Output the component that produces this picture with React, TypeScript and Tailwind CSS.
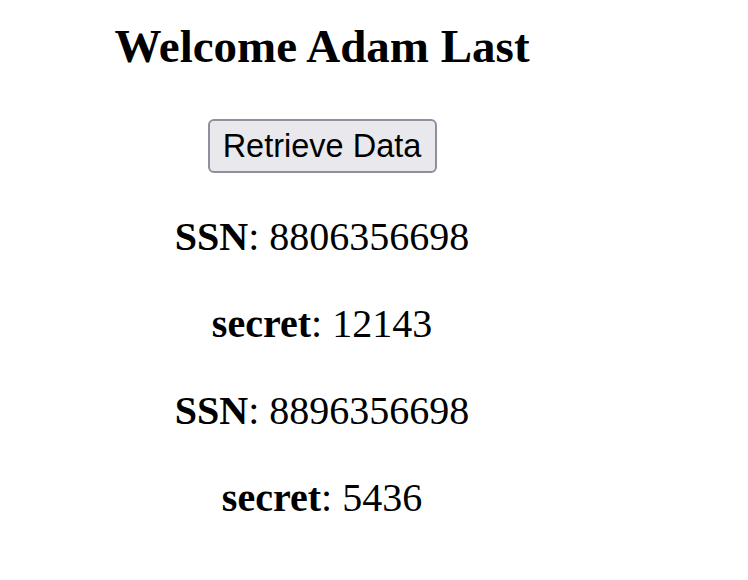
export default function App() {
  const records = [
    { label: "SSN", value: "8806356698" },
    { label: "secret", value: "12143" },
    { label: "SSN", value: "8896356698" },
    { label: "secret", value: "5436" },
  ];

  return (
    <div className="min-h-[580px] w-[748px] bg-white text-black">
      <div className="flex w-[644px] flex-col items-center pt-[20px] text-center font-['Liberation_Serif',serif]">
        <h1 className="text-[47px] font-bold leading-[52px]">Welcome Adam Last</h1>

        <button
          type="button"
          className="mt-[47px] flex h-[54px] w-[229px] items-center justify-center rounded-[6px] border-2 border-[#8f8f9d] bg-[#e9e9ed] font-['Liberation_Sans',sans-serif] text-[32.5px] leading-none text-black"
        >
          Retrieve Data
        </button>

        <div className="mt-[42px] flex flex-col gap-[43px]">
          {records.map((r, i) => (
            <p key={i} className="text-[40px] leading-[44px]">
              <b>{r.label}</b>: {r.value}
            </p>
          ))}
        </div>
      </div>
    </div>
  );
}
